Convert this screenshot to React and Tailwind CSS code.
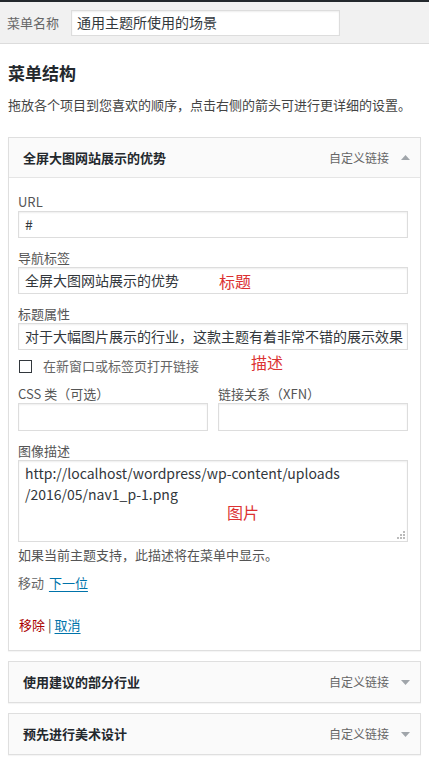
import React from "react";

const font = "font-['Noto_Sans_CJK_SC','Noto_Sans',sans-serif]";

function Arrow({ up }) {
  return (
    <svg width="9" height="5" viewBox="0 0 9 5" className="block">
      {up ? (
        <polygon points="0,5 9,5 4.5,0" fill="#a0a5aa" />
      ) : (
        <polygon points="0,0 9,0 4.5,5" fill="#a0a5aa" />
      )}
    </svg>
  );
}

function ItemHeader({ title, up, border }) {
  return (
    <div
      className={`h-[40px] flex items-center justify-between pl-[14px] pr-[10px] bg-[#fafafa] ${
        border ? "border-b border-[#e5e5e5]" : ""
      }`}
    >
      <span className="text-[13px] font-bold text-[#23282d]">{title}</span>
      <div className="flex items-center gap-[12px]">
        <span className="text-[12px] text-[#666]">自定义链接</span>
        <Arrow up={up} />
      </div>
    </div>
  );
}

function Label({ children, className = "" }) {
  return (
    <div className={`text-[13px] leading-[19px] text-[#555] ${className}`}>{children}</div>
  );
}

function Input({ children, className = "" }) {
  return (
    <div
      className={`h-[27px] border border-[#ddd] bg-white px-[6px] flex items-center text-[14px] text-[#32373c] whitespace-nowrap overflow-hidden shadow-[inset_0_1px_2px_rgba(0,0,0,0.07)] ${className}`}
    >
      {children}
    </div>
  );
}

export default function App() {
  return (
    <div className={`relative w-[429px] h-[766px] overflow-hidden bg-white ${font}`}>
      <div className="h-[2px] bg-[#23282d]" />
      <div className="h-[42px] bg-[#f1f1f1] border-b border-[#dcdcdc] flex items-center pl-[7px] gap-[12px]">
        <span className="text-[13px] text-[#666]">菜单名称</span>
        <div className="w-[269px] h-[26px] border border-[#ddd] bg-white flex items-center px-[5px] text-[14px] text-[#32373c] shadow-[inset_0_1px_2px_rgba(0,0,0,0.07)]">
          通用主题所使用的场景
        </div>
      </div>

      <div className="px-[8px]">
        <h2 className="mt-[17px] text-[17px] leading-[24px] font-bold text-[#23282d]">菜单结构</h2>
        <p className="mt-[10px] text-[13px] leading-[20px] text-[#444]">
          拖放各个项目到您喜欢的顺序，点击右侧的箭头可进行更详细的设置。
        </p>

        <div className="mt-[22px] border border-[#dfdfdf] shadow-[0_1px_1px_rgba(0,0,0,0.04)]">
          <ItemHeader title="全屏大图网站展示的优势" up border />
          <div className="pl-[9px] pr-[12px] pt-[14px] pb-[16px] bg-white">
            <Label>URL</Label>
            <Input>#</Input>
            <Label className="mt-[10px]">导航标签</Label>
            <Input>全屏大图网站展示的优势</Input>
            <Label className="mt-[10px]">标题属性</Label>
            <Input>对于大幅图片展示的行业，这款主题有着非常不错的展示效果</Input>
            <div className="mt-[7px] h-[18px] flex items-center gap-[11px] pl-[1px]">
              <div className="w-[13px] h-[13px] border-[1.5px] border-[#32373c] bg-white" />
              <span className="text-[13px] text-[#666]">在新窗口或标签页打开链接</span>
            </div>
            <div className="mt-[9px] grid grid-cols-2 gap-x-[10px]">
              <div>
                <Label>CSS 类（可选）</Label>
                <Input className="h-[28px]" />
              </div>
              <div>
                <Label>链接关系（XFN）</Label>
                <Input className="h-[28px]" />
              </div>
            </div>
            <Label className="mt-[10px]">图像描述</Label>
            <div className="relative h-[82px] border border-[#ddd] bg-white pl-[6px] pt-[2px] text-[14px] leading-[21px] text-[#32373c] shadow-[inset_0_1px_2px_rgba(0,0,0,0.07)]">
              <div>http://localhost/wordpress/wp-content/uploads</div>
              <div>/2016/05/nav1_p-1.png</div>
              <svg
                width="8"
                height="8"
                viewBox="0 0 8 8"
                className="absolute right-[2px] bottom-[2px]"
              >
                <rect x="6" y="0" width="2" height="2" fill="#bbb" />
                <rect x="3" y="3" width="2" height="2" fill="#bbb" />
                <rect x="6" y="3" width="2" height="2" fill="#bbb" />
                <rect x="0" y="6" width="2" height="2" fill="#bbb" />
                <rect x="3" y="6" width="2" height="2" fill="#bbb" />
                <rect x="6" y="6" width="2" height="2" fill="#bbb" />
              </svg>
            </div>
            <div className="mt-[3px] text-[13px] leading-[19px] text-[#555]">
              如果当前主题支持，此描述将在菜单中显示。
            </div>
            <div className="mt-[9px] text-[13px] leading-[19px] text-[#666]">
              移动 <span className="ml-[2px] text-[#0073aa] underline underline-offset-[3px]">下一位</span>
            </div>
            <div className="mt-[23px] text-[13px] leading-[19px] pl-[1px]">
              <span className="text-[#a00]">移除</span>
              <span className="text-[#444] mx-[3px]">|</span>
              <span className="text-[#0073aa] underline underline-offset-[3px]">取消</span>
            </div>
          </div>
        </div>

        <div className="mt-[10px] border border-[#dfdfdf] shadow-[0_1px_1px_rgba(0,0,0,0.04)]">
          <ItemHeader title="使用建议的部分行业" />
        </div>
        <div className="mt-[10px] border border-[#dfdfdf] shadow-[0_1px_1px_rgba(0,0,0,0.04)]">
          <ItemHeader title="预先进行美术设计" />
        </div>
      </div>

      <span className="absolute left-[219px] top-[270px] text-[16px] leading-[22px] text-[#dc3232]">标题</span>
      <span className="absolute left-[251px] top-[351px] text-[16px] leading-[22px] text-[#dc3232]">描述</span>
      <span className="absolute left-[227px] top-[501px] text-[16px] leading-[22px] text-[#dc3232]">图片</span>
    </div>
  );
}
